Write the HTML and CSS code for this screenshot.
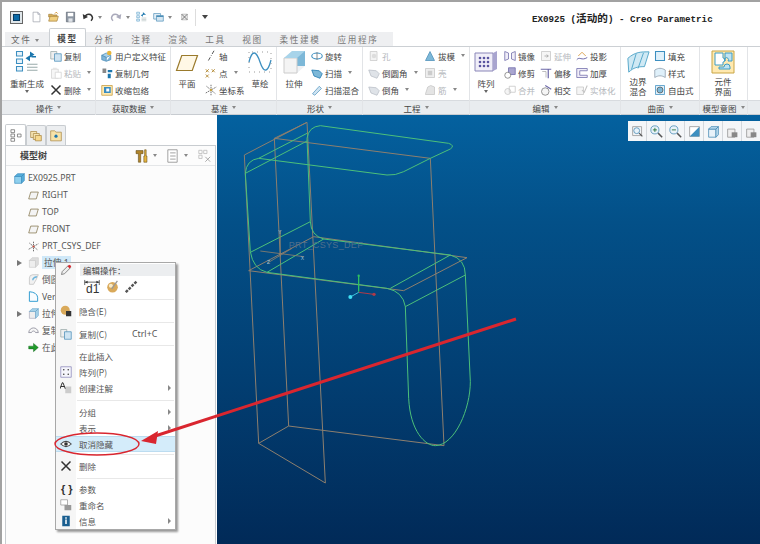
FILE: index.html
```html
<!DOCTYPE html>
<html lang="zh">
<head>
<meta charset="utf-8">
<title>EX0925 - Creo Parametric</title>
<link rel="stylesheet" href="styles.css">
</head>
<body>
<svg class="defs" aria-hidden="true">
<defs>
<symbol id="doc" viewBox="0 0 16 16"><path d="M3 1h7l3 3v11H3z" fill="#fff" stroke="#9a9fa8"/><path d="M10 1v3h3" fill="#dde" stroke="#9a9fa8"/></symbol>
<symbol id="open" viewBox="0 0 16 16"><path d="M1 4h5l1 1h6v3H1z" fill="#d9b25c" stroke="#a5803a"/><path d="M1 14l2-7h12l-2 7z" fill="#f0cf80" stroke="#a5803a"/><path d="M10 3l2-2 2 2" fill="none" stroke="#d08a20" stroke-width="1.4"/></symbol>
<symbol id="save" viewBox="0 0 16 16"><path d="M2 1h12v14H2z" fill="#8d97a3" stroke="#5d6671"/><path d="M4 2h8v5H4z" fill="#fff"/><path d="M5 10h6v5H5z" fill="#dfe3e8"/></symbol>
<symbol id="undo" viewBox="0 0 16 16"><path d="M4 8c2-5 9-5 10 1 0 2-1 3-2 4" fill="none" stroke="currentColor" stroke-width="2"/><path d="M1 4l1 7 6-3z" fill="currentColor"/></symbol>
<symbol id="regen" viewBox="0 0 16 16"><path d="M1 1h4v3H1zM1 6h4v3H1zM1 11h4v3H1z" fill="#e8f3fa" stroke="#3d8fc0" stroke-width=".7"/><path d="M8 9.500h7M8 11.500h7M8 13.500h7" stroke="#9aa" fill="none" stroke-width=".7"/><path d="M10 1l3 2-3 2zM10 3.500l-3 2 3 2zM11 4h3v1h-3z" fill="#1b76ad"/></symbol>
<symbol id="win" viewBox="0 0 16 16"><path d="M1 3h10v8H1z" fill="#e8f2f9" stroke="#4d8fb8"/><path d="M5 6h10v8H5z" fill="#d4e6f2" stroke="#4d8fb8"/><path d="M5 6h10v2H5z" fill="#4d8fb8"/></symbol>
<symbol id="x" viewBox="0 0 16 16"><path d="M2 2l12 12M14 2L2 14" stroke="#333" stroke-width="2" fill="none"/></symbol>
<symbol id="xs" viewBox="0 0 16 16"><path d="M3 3h10v10H3z" fill="#eee" stroke="#999"/><path d="M3 3l10 10M13 3L3 13" stroke="#666" stroke-width="1.5"/></symbol>
<symbol id="copy" viewBox="0 0 16 16"><path d="M1 2h8v10H1z" fill="#eee" stroke="#9aa"/><path d="M6 5h9v10H6z" fill="#cfe4f2" stroke="#4d8fb8"/></symbol>
<symbol id="paste" viewBox="0 0 16 16" opacity=".5"><path d="M2 3h9v12H2z" fill="#eee" stroke="#aaa"/><path d="M7 7h8v8H7z" fill="#fff" stroke="#aaa"/><path d="M4 1h5v3H4z" fill="#ccc"/></symbol>
<symbol id="udf" viewBox="0 0 16 16"><path d="M1 7l6-3 6 3-6 3z" fill="#a8d0ea" stroke="#4d8fb8"/><path d="M1 7v6l6 2V10zM13 7v6l-6 2" fill="#7fb4d8" stroke="#4d8fb8"/><circle cx="11" cy="4" r="3" fill="#e6b53e"/></symbol>
<symbol id="cg" viewBox="0 0 16 16"><path d="M2 2h5v6H2z" fill="#888"/><path d="M9 4h6v3H9z" fill="#1b76ad"/><path d="M9 9h4v6H9z" fill="#1b76ad"/></symbol>
<symbol id="sw" viewBox="0 0 16 16"><path d="M1 2h14v13H1z" fill="#ffe9b0" stroke="#c49a3c"/><path d="M4 4h9v8H4z" fill="#3a8cc0"/><path d="M7 6h4v4H7z" fill="#fff"/></symbol>
<symbol id="plane" viewBox="0 0 32 24"><path d="M9 2h21l-7 20H2z" fill="#fff8e6" stroke="#9a7a2c" stroke-width="1.6"/></symbol>
<symbol id="axis" viewBox="0 0 16 16"><path d="M12 1L4 15" stroke="#444" stroke-dasharray="5 2 1 2" stroke-width="1.2" fill="none"/></symbol>
<symbol id="pt" viewBox="0 0 16 16"><path d="M1 3l4 4M5 3L1 7M9 3l4 4M13 3L9 7M1 10l4 4M5 10l-4 4" stroke="#b0862c" stroke-width="1.2"/></symbol>
<symbol id="cs" viewBox="0 0 16 16"><path d="M8 1v14M1 12l7-4 7-4M2 3l12 10" stroke="#444" stroke-dasharray="2 1" fill="none"/><circle cx="8" cy="8" r="1.6" fill="#c9a23e"/></symbol>
<symbol id="sketch" viewBox="0 0 24 22"><path d="M1 11c3-12 7-12 11 0s8 10 11-2" fill="none" stroke="#3d8fc0" stroke-width="1.3"/><path d="M1 1v20h22V1z" fill="none" stroke="#999" stroke-dasharray="1 4"/></symbol>
<symbol id="extr" viewBox="0 0 24 24"><path d="M2 8l8-7h13v15l-8 7H2z" fill="#eef1f4"/><path d="M10 1h13v15l-8 0z" fill="#7db8d8"/><path d="M2 8h13v15H2z" fill="#f4f4f4" stroke="#ccc"/><path d="M2 8l8-7h13l-8 7z" fill="#a8d4ea"/></symbol>
<symbol id="rev" viewBox="0 0 16 16"><ellipse cx="8" cy="8" rx="7" ry="4" fill="none" stroke="#3d8fc0" stroke-width="1.4"/><path d="M8 3v10" stroke="#666"/></symbol>
<symbol id="sweep" viewBox="0 0 16 16"><path d="M1 4l10 1 4 4-3 6-8-3z" fill="#7db8d8" stroke="#1b76ad"/></symbol>
<symbol id="blend" viewBox="0 0 16 16"><path d="M2 13L11 3l3 3-9 9z" fill="#cfe4f2" stroke="#5a9ac2"/></symbol>
<symbol id="gsweep" viewBox="0 0 16 16"><path d="M1 4l10 1 4 4-3 6-8-3z" fill="#dfe3e8" stroke="#b8bec6"/></symbol>
<symbol id="ghole" viewBox="0 0 16 16"><path d="M3 2h9v12H3z" fill="#f3f3f3" stroke="#c8c8c8"/><circle cx="8" cy="8" r="3" fill="#ddd"/></symbol>
<symbol id="draft" viewBox="0 0 16 16"><path d="M2 14L8 2l6 12z" fill="#7db8d8" stroke="#4d8fb8"/></symbol>
<symbol id="gbox" viewBox="0 0 16 16"><path d="M2 2h12v12H2z" fill="#eee" stroke="#c4c4c4"/><path d="M5 5h6v6H5z" fill="#ccc"/></symbol>
<symbol id="grib" viewBox="0 0 16 16"><path d="M2 13l3-9 4-2 5 2v10H2z" fill="#e4e4e4" stroke="#c4c4c4"/></symbol>
<symbol id="grid" viewBox="0 0 24 24"><path d="M1 3h18v18H1z" fill="#f0eef8" stroke="#8a86b8"/><path d="M19 3l4-2v18l-4 2z" fill="#a9a5cf"/><g fill="#5a55a0"><circle cx="6" cy="8" r="1.3"/><circle cx="10" cy="8" r="1.3"/><circle cx="14" cy="8" r="1.3"/><circle cx="6" cy="12" r="1.3"/><circle cx="10" cy="12" r="1.3"/><circle cx="14" cy="12" r="1.3"/><circle cx="6" cy="16" r="1.3"/><circle cx="10" cy="16" r="1.3"/><circle cx="14" cy="16" r="1.3"/></g></symbol>
<symbol id="mirror" viewBox="0 0 16 16"><path d="M1 2l5 2v8l-5 2zM15 2l-5 2v8l5 2z" fill="#f0eef8" stroke="#6c68a8"/></symbol>
<symbol id="trim" viewBox="0 0 16 16"><path d="M6 1h9v9H6z" fill="#a9a5cf" stroke="#6c68a8"/><circle cx="5" cy="11" r="4" fill="#fff" stroke="#777"/></symbol>
<symbol id="gmerge" viewBox="0 0 16 16"><circle cx="5" cy="10" r="4" fill="#f5f5f5" stroke="#c4c4c4"/><path d="M7 3h8v8H7z" fill="none" stroke="#c4c4c4"/></symbol>
<symbol id="gext" viewBox="0 0 16 16"><path d="M2 2h12v12H2z" fill="#f5f5f5" stroke="#c4c4c4"/><path d="M6 8h5M9 6l2 2-2 2" stroke="#999" fill="none"/></symbol>
<symbol id="offs" viewBox="0 0 16 16"><path d="M1 3h14M11 3v12" stroke="#6c68a8" stroke-width="1.6" fill="none"/><path d="M3 6h5v8" stroke="#aaa" fill="none"/></symbol>
<symbol id="inter" viewBox="0 0 16 16"><circle cx="7" cy="10" r="5" fill="#f5f5f5" stroke="#777"/><path d="M7 2l8 5" stroke="#6c68a8" stroke-width="1.4"/></symbol>
<symbol id="proj" viewBox="0 0 16 16"><path d="M1 13c4-5 6 2 14-3" stroke="#6c68a8" fill="none" stroke-width="1.3"/><path d="M3 8l5-5 5 5" stroke="#d08a20" fill="none"/></symbol>
<symbol id="thick" viewBox="0 0 16 16"><path d="M1 2h14v3H5v6h10v3H1z" fill="#f0eef8" stroke="#6c68a8"/></symbol>
<symbol id="gsolid" viewBox="0 0 16 16"><path d="M1 4h9v10H1z" fill="#f5f5f5" stroke="#c4c4c4"/><path d="M8 8l3 3 4-9" fill="none" stroke="#c4c4c4" stroke-width="1.4"/></symbol>
<symbol id="bound" viewBox="0 0 26 24"><path d="M2 8c8-7 14-7 23-7l-5 16c-7 0-12 1-17 6z" fill="#cfe9f4" stroke="#4fa4c8"/><path d="M11 3l-5 17M19 2l-6 17" stroke="#4fa4c8" fill="none"/></symbol>
<symbol id="fill" viewBox="0 0 16 16"><path d="M2 2h12v12H2z" fill="#dff0fa" stroke="#3d8fc0" stroke-width="1.4"/></symbol>
<symbol id="style" viewBox="0 0 16 16"><path d="M1 4c5-3 9-3 14 0v10c-5-3-9-3-14 0z" fill="#dff0fa" stroke="#8a9aa8"/></symbol>
<symbol id="free" viewBox="0 0 16 16"><path d="M2 2h12v12H2z" fill="#dff0fa" stroke="#3d8fc0"/><circle cx="8" cy="8" r="4" fill="#7db8d8" stroke="#555"/></symbol>
<symbol id="puzzle" viewBox="0 0 24 24"><path d="M1 1h22v22H1z" fill="#ffe9b0" stroke="#c9a544"/><path d="M4 3h8v5a2 2 0 1 1 0 4v3H4z" fill="#fff" stroke="#3d9cc4"/><path d="M14 3h7v8h-4a2 2 0 1 0-3 0zM13 17a3 3 0 0 1 6 0v2H8v-2z" fill="#bfe3f2" stroke="#3d9cc4"/></symbol>
<symbol id="tree" viewBox="0 0 16 18"><path d="M1 1h5v4H1zM1 7h5v4H1zM1 13h5v4H1zM10 7h5v4h-5z" fill="#fff" stroke="#666"/></symbol>
<symbol id="tab2" viewBox="0 0 18 18"><path d="M1 3h9v9H1z" fill="#f5e5b5" stroke="#a5803a"/><path d="M5 6h9v9H5z" fill="#f5e5b5" stroke="#a5803a"/><path d="M8 9h9v8H8z" fill="#f7d98e" stroke="#a5803a"/></symbol>
<symbol id="tab3" viewBox="0 0 18 18"><path d="M1 2h6l2 2h8v13H1z" fill="#f7e2a8" stroke="#a5803a"/><circle cx="9" cy="10" r="2.4" fill="#1b76ad"/></symbol>
<symbol id="tools" viewBox="0 0 16 18"><path d="M1 2h9v4H7v11H4V6H1z" fill="#b0852c" stroke="#5e4714" stroke-width=".7"/><path d="M12 1h2v8h1v8h-4V9h1z" fill="#e6b53e" stroke="#5e4714" stroke-width=".7"/></symbol>
<symbol id="list" viewBox="0 0 16 18"><path d="M2 1h12v16H2z" fill="#fff" stroke="#888"/><path d="M5 5h7M5 9h7M5 13h7" stroke="#888"/></symbol>
<symbol id="filt" viewBox="0 0 16 16"><path d="M1 1h4v4H1zM1 7h4v4H1zM7 1h4v4H7z" fill="none" stroke="#bbb"/><path d="M9 9l6 6M15 9l-6 6" stroke="#999"/></symbol>
<symbol id="part" viewBox="0 0 16 16"><path d="M1 5h10v10H1z" fill="#8fd0ee" stroke="#3d8fc0"/><path d="M1 5l4-4h10l-4 4zM11 5l4-4v10l-4 4z" fill="#56aedb" stroke="#3d8fc0"/></symbol>
<symbol id="dplane" viewBox="0 0 16 12"><path d="M4 1h11l-3 10H1z" fill="#f4f4f4" stroke="#7a6a3e"/></symbol>
<symbol id="csys" viewBox="0 0 16 16"><path d="M8 1v14M1 12l14-8M2 3l12 10" stroke="#333" stroke-dasharray="2 1" fill="none"/><circle cx="8" cy="8" r="1.4" fill="#c43"/></symbol>
<symbol id="ext1" viewBox="0 0 16 16"><path d="M2 5h9v10H2z" fill="#eee" stroke="#ccc"/><path d="M2 5l4-4h9v10l-4 4V5z" fill="#ddd" stroke="#ccc"/></symbol>
<symbol id="ext2" viewBox="0 0 16 16"><path d="M2 5h9v10H2z" fill="#eee" stroke="#aab"/><path d="M2 5l4-4h9l-4 4zM11 5l4-4v10l-4 4z" fill="#a8d4ea" stroke="#6ca8cc"/></symbol>
<symbol id="rnd" viewBox="0 0 16 16"><path d="M2 15V6q0-5 5-5h8l-3 7-4 7z" fill="#f1f1f1" stroke="#bbb"/><path d="M7 9q0-4 6-5" stroke="#6cb4dc" stroke-width="2" fill="none"/></symbol>
<symbol id="ver" viewBox="0 0 16 16"><path d="M2 1v14h12V9Q13 2 2 1z" fill="#f8fcff" stroke="#2e9bd0" stroke-width="1.4"/></symbol>
<symbol id="cpy" viewBox="0 0 16 16"><path d="M1 11c1-9 13-9 14 0H11C10 8 6 8 5 11z" fill="#f7f7f7" stroke="#778"/></symbol>
<symbol id="ins" viewBox="0 0 16 16"><path d="M1 6h7V2l7 6-7 6v-4H1z" fill="#1f9a2a" stroke="#0b5c14" stroke-width=".6"/></symbol>
<symbol id="pencil" viewBox="0 0 16 16"><path d="M2 14l1-4 8-8 3 3-8 8z" fill="#eee" stroke="#666"/><path d="M10 3l3-2 2 2-2 3z" fill="#d9262f"/></symbol>
<symbol id="dim" viewBox="0 0 22 20"><path d="M1 1v7M21 1v7M1 4h20" stroke="#333" fill="none"/><path d="M1 4l4-2v4zM21 4l-4-2v4z" fill="#333"/></symbol>
<symbol id="ball" viewBox="0 0 16 16"><circle cx="8" cy="9" r="6.5" fill="#d9a95a"/><circle cx="6" cy="7" r="2.5" fill="#f8ebc8"/><path d="M7 11L14 1" stroke="#999" stroke-width="1.6"/></symbol>
<symbol id="chain" viewBox="0 0 16 16"><path d="M1 15L15 1" stroke="#555" stroke-width="3" stroke-dasharray="3.5 1.500"/></symbol>
<symbol id="supp" viewBox="0 0 16 16"><circle cx="7" cy="7" r="6" fill="#d9a95a"/><path d="M8 8h7v7H8z" fill="#333"/></symbol>
<symbol id="pat" viewBox="0 0 16 16"><path d="M1 1h14v14H1z" fill="#f6f6fc" stroke="#8a86b8"/><g fill="#444"><circle cx="5" cy="5" r="1.1"/><circle cx="11" cy="5" r="1.1"/><circle cx="5" cy="11" r="1.1"/><circle cx="11" cy="11" r="1.1"/></g></symbol>
<symbol id="ann" viewBox="0 0 16 16"><path d="M7 6h8v9H7z" fill="#ccc"/><path d="M0 9L3 1h1l3 8M1 6h5" stroke="#222" fill="none" stroke-width="1.2"/></symbol>
<symbol id="eye" viewBox="0 0 16 16"><path d="M1 8q7-7 14 0-7 7-14 0z" fill="#fff" stroke="#444" stroke-width="1.4"/><circle cx="8" cy="8" r="2.4" fill="#333"/></symbol>
<symbol id="rename" viewBox="0 0 16 16"><path d="M1 1h9v7H1z" fill="#fff" stroke="#999"/><path d="M6 8h9v7H6z" fill="#999"/></symbol>
<symbol id="info" viewBox="0 0 16 16"><path d="M3 1h10v14H3z" fill="#1a5f90"/><path d="M7 3h2v2H7zM7 6h2v6H7z" fill="#fff"/></symbol>
<symbol id="zfit" viewBox="0 0 16 16"><path d="M2 2h11v11H2z" fill="none" stroke="#999"/><circle cx="7" cy="7" r="3.6" fill="#e8f2f9" stroke="#4d8fb8"/><path d="M10 10l4 4" stroke="#555" stroke-width="1.6"/></symbol>
<symbol id="zin" viewBox="0 0 16 16"><circle cx="6" cy="6" r="5" fill="#e8f2f9" stroke="#4d8fb8"/><path d="M3.500 6h5M6 3.500v5" stroke="#1a6a2a"/><path d="M10 10l5 5" stroke="#555" stroke-width="1.8"/></symbol>
<symbol id="zout" viewBox="0 0 16 16"><circle cx="6" cy="6" r="5" fill="#e8f2f9" stroke="#4d8fb8"/><path d="M3.500 6h5" stroke="#1a6a2a"/><path d="M10 10l5 5" stroke="#555" stroke-width="1.8"/></symbol>
<symbol id="repaint" viewBox="0 0 16 16"><path d="M2 2h12v12H2z" fill="#fff" stroke="#999"/><path d="M2 14L14 2v12z" fill="#3d8fc0"/></symbol>
<symbol id="view" viewBox="0 0 16 16"><path d="M2 5h9v10H2z" fill="#e8f2f9" stroke="#4d8fb8"/><path d="M2 5l3-3h9l-3 3zM11 5l3-3v10l-3 3z" fill="#bcdcef" stroke="#4d8fb8"/></symbol>
<symbol id="saved" viewBox="0 0 16 16"><path d="M2 5h9v10H2z" fill="#eee" stroke="#999"/><path d="M7 9h7v6H7z" fill="#888"/></symbol>
</defs>
</svg>

<div class="app">
  <header class="titlebar">
    <div class="qat">
      <span class="appicon"><span></span></span>
      <svg class="q q-first"><use href="#doc"/></svg>
      <svg class="q"><use href="#open"/></svg>
      <svg class="q"><use href="#save"/></svg>
      <svg class="q undo"><use href="#undo"/></svg><i class="caret"></i>
      <svg class="q redo"><use href="#undo"/></svg><i class="caret"></i>
      <svg class="q"><use href="#regen"/></svg>
      <svg class="q"><use href="#win"/></svg><i class="caret"></i>
      <svg class="q small"><use href="#xs"/></svg>
      <span class="qsep"></span>
      <i class="caret dark"></i>
    </div>
    <div class="wintitle">EX0925 (<span class="cjk">活动的</span>) - Creo Parametric</div>
  </header>

  <nav class="tabs">
    <span class="filetab">文件 <i class="caret"></i></span>
    <span class="tab active">模型</span>
    <span class="tab">分析</span>
    <span class="tab">注释</span>
    <span class="tab">渲染</span>
    <span class="tab">工具</span>
    <span class="tab">视图</span>
    <span class="tab wide">柔性建模</span>
    <span class="tab wide">应用程序</span>
  </nav>

  <section class="ribbon">
    <div class="group g1">
      <div class="gbody">
        <div class="big b1"><svg class="bigi"><use href="#regen"/></svg><span>重新生成</span><i class="caret"></i></div>
        <div class="col">
          <div class="it"><svg><use href="#copy"/></svg>复制</div>
          <div class="it off"><svg><use href="#paste"/></svg>粘贴<i class="caret"></i></div>
          <div class="it"><svg><use href="#x"/></svg>删除<i class="caret"></i></div>
        </div>
      </div>
      <div class="glabel">操作<i class="caret"></i></div>
    </div>
    <div class="group g2">
      <div class="gbody">
        <div class="col">
          <div class="it"><svg><use href="#udf"/></svg>用户定义特征</div>
          <div class="it"><svg><use href="#cg"/></svg>复制几何</div>
          <div class="it"><svg><use href="#sw"/></svg>收缩包络</div>
        </div>
      </div>
      <div class="glabel">获取数据<i class="caret"></i></div>
    </div>
    <div class="group g3">
      <div class="gbody">
        <div class="big b3a"><svg class="bigi mid"><use href="#plane"/></svg><span>平面</span></div>
        <div class="col c3">
          <div class="it"><svg><use href="#axis"/></svg>轴</div>
          <div class="it"><svg><use href="#pt"/></svg>点<i class="caret"></i></div>
          <div class="it"><svg><use href="#cs"/></svg>坐标系</div>
        </div>
        <div class="big b3b"><svg class="bigi"><use href="#sketch"/></svg><span>草绘</span></div>
      </div>
      <div class="glabel">基准<i class="caret"></i></div>
    </div>
    <div class="group g4">
      <div class="gbody">
        <div class="big b4"><svg class="bigi"><use href="#extr"/></svg><span>拉伸</span></div>
        <div class="col">
          <div class="it"><svg><use href="#rev"/></svg>旋转</div>
          <div class="it"><svg><use href="#sweep"/></svg>扫描<i class="caret"></i></div>
          <div class="it"><svg><use href="#blend"/></svg>扫描混合</div>
        </div>
      </div>
      <div class="glabel">形状<i class="caret"></i></div>
    </div>
    <div class="group g5">
      <div class="gbody">
        <div class="col c5a">
          <div class="it off"><svg><use href="#ghole"/></svg>孔</div>
          <div class="it"><svg><use href="#gsweep"/></svg>倒圆角<i class="caret"></i></div>
          <div class="it"><svg><use href="#gsweep"/></svg>倒角<i class="caret"></i></div>
        </div>
        <div class="col">
          <div class="it"><svg><use href="#draft"/></svg>拔模<i class="caret"></i></div>
          <div class="it off"><svg><use href="#gbox"/></svg>壳</div>
          <div class="it off"><svg><use href="#grib"/></svg>筋<i class="caret"></i></div>
        </div>
      </div>
      <div class="glabel">工程<i class="caret"></i></div>
    </div>
    <div class="group g6">
      <div class="gbody">
        <div class="big b6"><svg class="bigi"><use href="#grid"/></svg><span>阵列</span><i class="caret"></i></div>
        <div class="col c6">
          <div class="it"><svg><use href="#mirror"/></svg>镜像</div>
          <div class="it"><svg><use href="#trim"/></svg>修剪</div>
          <div class="it off"><svg><use href="#gmerge"/></svg>合并</div>
        </div>
        <div class="col c6">
          <div class="it off"><svg><use href="#gext"/></svg>延伸</div>
          <div class="it"><svg><use href="#offs"/></svg>偏移</div>
          <div class="it"><svg><use href="#inter"/></svg>相交</div>
        </div>
        <div class="col">
          <div class="it"><svg><use href="#proj"/></svg>投影</div>
          <div class="it"><svg><use href="#thick"/></svg>加厚</div>
          <div class="it off"><svg><use href="#gsolid"/></svg>实体化</div>
        </div>
      </div>
      <div class="glabel">编辑<i class="caret"></i></div>
    </div>
    <div class="group g7">
      <div class="gbody">
        <div class="big b7"><svg class="bigi"><use href="#bound"/></svg><span class="two">边界<br>混合</span></div>
        <div class="col">
          <div class="it"><svg><use href="#fill"/></svg>填充</div>
          <div class="it"><svg><use href="#style"/></svg>样式</div>
          <div class="it"><svg><use href="#free"/></svg>自由式</div>
        </div>
      </div>
      <div class="glabel">曲面<i class="caret"></i></div>
    </div>
    <div class="group g8">
      <div class="gbody">
        <div class="big b8"><svg class="bigi"><use href="#puzzle"/></svg><span class="two">元件<br>界面</span></div>
      </div>
      <div class="glabel">模型意图<i class="caret"></i></div>
    </div>
    <div class="group g9"><div class="gbody"></div><div class="glabel"></div></div>
  </section>

  <main class="main">
    <aside class="side">
      <div class="sidetabs">
        <span class="stab active"><svg><use href="#tree"/></svg></span>
        <span class="stab"><svg><use href="#tab2"/></svg></span>
        <span class="stab"><svg><use href="#tab3"/></svg></span>
      </div>
      <div class="panel">
        <div class="panelhead">
          <span class="ptitle">模型树</span>
          <svg class="ph"><use href="#tools"/></svg><i class="caret"></i>
          <svg class="ph"><use href="#list"/></svg><i class="caret"></i>
          <svg class="ph last"><use href="#filt"/></svg>
        </div>
        <ul class="tree">
          <li class="root"><svg><use href="#part"/></svg>EX0925.PRT</li>
          <li><svg><use href="#dplane"/></svg>RIGHT</li>
          <li><svg><use href="#dplane"/></svg>TOP</li>
          <li><svg><use href="#dplane"/></svg>FRONT</li>
          <li><svg><use href="#csys"/></svg>PRT_CSYS_DEF</li>
          <li><b class="tw"></b><svg><use href="#ext1"/></svg><span class="sel">拉伸 1</span></li>
          <li><svg><use href="#rnd"/></svg>倒圆角 1</li>
          <li><svg><use href="#ver"/></svg>Ver</li>
          <li><b class="tw"></b><svg><use href="#ext2"/></svg>拉伸 2</li>
          <li><svg><use href="#cpy"/></svg>复制 1</li>
          <li><svg><use href="#ins"/></svg>在此插入</li>
        </ul>
      </div>
    </aside>

    <section class="canvas">
      <svg class="model" viewBox="0 0 900 1290">
        <g class="gray">
          <path d="M82 120L270 22L325 1104L125 985L82 120"/>
          <path d="M172 70L640 130L681 992L215 933L172 70"/>
          <path d="M270 22L172 70M125 985L215 933"/>
          <path d="M95 467L290 365L750 428L560 527L95 467"/>
        </g>
        <g class="green">
          <path d="M310 32L695 85Q715 92 700 102L640 130L560 170Q535 182 510 180L125 130Q88 135 85 175L100 410Q108 462 150 472L510 520Q558 530 565 575L575 850C580 950 625 992 655 992C715 990 760 880 760 800L745 480Q745 432 700 420L320 372Q282 362 280 320L270 70Q275 35 310 32Z"/>
          <path d="M85 175L270 78M125 130L270 55M100 412L280 320M150 472L320 372M565 575L745 480M520 520L700 420"/>
        </g>
        <g class="csysline">
          <path d="M190 345V425M130 408L260 425M150 445L225 400"/>
        </g>
        <text class="modeltext" x="215" y="400">PRT_CSYS_DEF</text>
        <text class="axislabel" x="184" y="356">Y</text>
        <text class="axislabel" x="150" y="446">Z</text>
        <text class="axislabel" x="251" y="434">X</text>
        <path class="ax-g" d="M425 482V530"/>
        <path class="ax-r" d="M425 532L470 538"/>
        <path class="ax-c" d="M425 532L400 546"/>
        <circle class="dot-g" cx="425" cy="482" r="3.5"/>
        <circle class="dot-r" cx="471" cy="538" r="5"/>
        <circle class="dot-c" cx="400" cy="546" r="6"/>
      </svg>
      <div class="viewbar">
        <span class="vb"><svg><use href="#zfit"/></svg></span>
        <span class="vb"><svg><use href="#zin"/></svg></span>
        <span class="vb"><svg><use href="#zout"/></svg></span>
        <span class="vb"><svg><use href="#repaint"/></svg></span>
        <span class="vb"><svg><use href="#view"/></svg></span>
        <span class="vb"><svg><use href="#saved"/></svg></span>
        <span class="vb"><svg><use href="#saved"/></svg></span>
      </div>
    </section>
  </main>

  <div class="menu">
    <div class="mhead"><svg class="mi"><use href="#pencil"/></svg><span class="mheadtext">编辑操作：</span></div>
    <div class="miniicons">
      <svg class="d"><use href="#dim"/></svg><span class="d1">d1</span>
      <svg class="m"><use href="#ball"/></svg>
      <svg class="m"><use href="#chain"/></svg>
    </div>
    <hr>
    <div class="mrow r-sep"><svg class="mi"><use href="#supp"/></svg>隐含(E)</div>
    <hr>
    <div class="mrow r-sep"><svg class="mi"><use href="#copy"/></svg>复制(C)<span class="short">Ctrl+C</span></div>
    <hr>
    <div class="mrow"><span class="mi"></span>在此插入</div>
    <div class="mrow"><svg class="mi"><use href="#pat"/></svg>阵列(P)</div>
    <div class="mrow"><svg class="mi"><use href="#ann"/></svg>创建注解<i class="sub"></i></div>
    <hr class="gap3">
    <div class="mrow"><span class="mi"></span>分组<i class="sub"></i></div>
    <div class="mrow"><span class="mi"></span>表示<i class="sub"></i></div>
    <div class="mrow hi"><svg class="mi"><use href="#eye"/></svg>取消隐藏</div>
    <hr>
    <div class="mrow r-sep"><svg class="mi"><use href="#x"/></svg>删除</div>
    <hr class="gap1">
    <div class="mrow"><span class="mi brace">{ }</span>参数</div>
    <div class="mrow"><svg class="mi"><use href="#rename"/></svg>重命名</div>
    <div class="mrow"><svg class="mi"><use href="#info"/></svg>信息<i class="sub"></i></div>
  </div>

  <svg class="annot" viewBox="0 0 760 544">
    <line x1="516" y1="319" x2="152" y2="437"/>
    <polygon points="141,441 158,431 156,444"/>
    <ellipse cx="97" cy="444" rx="42" ry="11"/>
  </svg>
</div>
</body>
</html>
```
FILE: styles.css
```css
* { box-sizing: border-box; }
html, body { margin: 0; padding: 0; }
body { width: 760px; height: 544px; overflow: hidden; background: #fff; font-family: "Noto Sans CJK SC", "Noto Sans", sans-serif; font-size: 8.5px; color: #555; }
.defs { position: absolute; width: 0; height: 0; }
.app { position: relative; width: 760px; height: 544px; display: flex; flex-direction: column; border-top: 2px solid #a2a2a2; border-left: 2px solid #a2a2a2; overflow: hidden; }

.caret { display: inline-block; width: 0; height: 0; border-left: 2.5px solid transparent; border-right: 2.5px solid transparent; border-top: 3px solid #888; margin-left: 4px; vertical-align: middle; }
.caret.dark { border-top-color: #444; border-left-width: 3px; border-right-width: 3px; border-top-width: 4px; margin-left: 6px; }

/* title bar */
.titlebar { height: 30px; flex: none; display: flex; align-items: center; background: #fff; }
.qat { display: flex; align-items: center; width: 530px; padding-left: 8px; }
.appicon { width: 13px; height: 13px; border: 1px solid #666; background: #dfe6ea; display: flex; align-items: center; justify-content: center; }
.appicon span { width: 7px; height: 7px; background: #0a6aa8; border: 1px solid #083a60; }
.q { width: 11px; height: 12px; margin-left: 6px; color: #333; flex: none; }
.q-first { margin-left: 8px; }
.q.undo { width: 12px; margin-left: 6px; }
.q.redo { width: 12px; margin-left: 8px; color: #aab; transform: scaleX(-1); }
.q.small { width: 9px; margin-left: 8px; }
.qsep { width: 1px; height: 17px; background: #ddd; margin-left: 6px; }
.qat .caret { margin-left: 4px; }
.qat .caret.dark { margin-left: 6px; }
.wintitle { font-family: "Liberation Mono", monospace; font-weight: 700; font-size: 9.2px; color: #222; white-space: nowrap; }
.cjk { font-family: "Noto Sans CJK SC", sans-serif; font-size: 10.6px; }

/* tabs */
.tabs { height: 14px; flex: none; width: 388px; margin-left: 3px; background: #eeeff1; display: flex; align-items: center; font-size: 8.6px; letter-spacing: 1.6px; color: #777; position: relative; }
.filetab { width: 44px; padding-left: 6px; white-space: nowrap; color: #666; }
.filetab .caret { margin-left: 0; }
.tab { width: 37px; text-align: center; flex: none; }
.tab.active { width: 37px; height: 18px; margin-top: -4px; line-height: 19px; background: #fff; border: 1px solid #ccd0d4; border-bottom: 0; font-weight: 700; color: #444; border-radius: 2px 2px 0 0; position: relative; z-index: 1; }
.tab.wide { width: 58px; }

/* ribbon */
.ribbon { display: flex; flex: none; height: 69px; border-top: 1px solid #ccd0d4; }
.group { display: flex; flex-direction: column; border-right: 1px solid #e2e4e7; flex: none; }
.gbody { height: 53px; display: flex; background: #fff; }
.glabel { height: 15px; background: #e9ecef; border-top: 1px solid #d8dbdf; border-bottom: 1px solid #c8ccd1; display: flex; align-items: center; justify-content: center; font-size: 8.5px; color: #444; white-space: nowrap; }
.g1 { width: 94px; }
.g2 { width: 75px; }
.g3 { width: 106px; }
.g4 { width: 86px; }
.g5 { width: 107px; }
.g6 { width: 151px; }
.g7 { width: 79px; }
.g8 { width: 48px; }
.g9 { flex: 1; border-right: 0; }

.big { display: flex; flex-direction: column; align-items: center; flex: none; font-size: 8.5px; line-height: 11px; color: #444; white-space: nowrap; padding-top: 3px; }
.bigi { width: 24px; height: 24px; flex: none; margin-bottom: 4px; }
.big .caret { margin: 1px 0 0; border-top-color: #666; }
.big .two { margin-top: -2px; line-height: 10px; }
.bigi.mid { width: 24px; height: 20px; margin: 3px 0 5px; }
.b1 { width: 34px; margin-left: 8px; margin-right: 6px; }
.b3a { width: 26px; margin: 0 5px 0 3px; }
.b3b { width: 26px; margin-left: 3px; }
.b4 { width: 24px; margin: 0 5px 0 5px; }
.b6 { width: 24px; margin: 0 6px 0 4px; }
.b7 { width: 26px; margin: 0 3px 0 4px; }
.b8 { width: 24px; margin-left: 11px; }

.col { display: flex; flex-direction: column; flex: none; }
.it { height: 17px; display: flex; align-items: center; white-space: nowrap; font-size: 8.5px; color: #444; }
.it svg { width: 12px; height: 12px; margin-right: 2px; flex: none; }
.it.off { color: #b4b8bc; }
.it .caret { margin-left: 6px; }
.g2 .col { padding-left: 5px; }
.c3 { width: 39px; }
.c5a { width: 61px; padding-left: 5px; }
.c6 { width: 36px; }

/* main */
.main { flex: 1; display: flex; min-height: 0; }
.side { width: 215px; flex: none; background: #fff; padding: 9px 0 0 3px; display: flex; flex-direction: column; }
.sidetabs { display: flex; height: 21px; }
.stab { width: 20px; height: 20px; margin-top: 1px; background: #eceef0; border: 1px solid #c8ccd0; border-bottom: 0; border-radius: 2px 2px 0 0; display: flex; align-items: center; justify-content: center; }
.stab svg { width: 12px; height: 13px; }
.stab.active { width: 21px; height: 21px; margin-top: 0; background: #fff; position: relative; z-index: 1; margin-bottom: -1px; }
.panel { flex: 1; border: 1px solid #c8ccd0; border-bottom: 0; margin-right: 1px; background: #fcfcfc; }
.panelhead { height: 20px; display: flex; align-items: center; padding-left: 14px; font-size: 9px; border-bottom: 1px solid #e4e6e8; }
.ptitle { font-weight: 700; color: #444; width: 115px; }
.ph { width: 13px; height: 14px; flex: none; }
.panelhead .caret { margin: 0 9px 0 5px; }
.ph.last { margin-left: 1px; }
.tree { list-style: none; margin: 0; padding: 4px 0 0 19px; font-family: "Noto Sans", "Noto Sans CJK SC", sans-serif; font-size: 8.7px; color: #555; }
.tree li { height: 16.9px; display: flex; align-items: center; white-space: nowrap; padding-left: 3px; position: relative; }
.tree li.root { margin-left: -11px; padding-left: 0; }
.tree svg { width: 11px; height: 11px; margin-right: 3px; flex: none; }
.tree .tw { position: absolute; left: -8px; width: 0; height: 0; border-left: 5px solid #777; border-top: 3.5px solid transparent; border-bottom: 3.5px solid transparent; }
.sel { background: #cfe8f8; padding: 0 2px; }

/* canvas */
.canvas { flex: 1; position: relative; overflow: hidden; background: linear-gradient(#04619f 0, #035088 25%, #023f73 60%, #012a58 100%); }
.model { position: absolute; left: 0; top: 0; width: 300px; height: 430px; }
.model path { fill: none; }
.gray path { stroke: #8d7f6e; stroke-width: 3; }
.green path { stroke: #4cc07a; stroke-width: 3; }
.csysline path { stroke: #8d7f6e; stroke-width: 2.5; }
.modeltext { font-family: "Liberation Sans", sans-serif; font-size: 27px; letter-spacing: 1px; fill: #4e6f8d; }
.axislabel { font-family: "Liberation Sans", sans-serif; font-size: 15px; fill: #9fc2d8; }
.model .ax-g { stroke: #2fc060; stroke-width: 4; }
.model .ax-r { stroke: #b03a48; stroke-width: 3; }
.model .ax-c { stroke: #40c8e0; stroke-width: 3; }
.dot-g { fill: #2fc060; }
.dot-r { fill: #b03a48; }
.dot-c { fill: #3fe0f4; }

.viewbar { position: absolute; left: 411px; top: 6px; display: flex; background: #f4f6f8; height: 20px; width: 135px; }
.vb { width: 19px; height: 20px; border-right: 1px solid #d4d8dc; display: flex; align-items: center; justify-content: center; flex: none; }
.vb svg { width: 13px; height: 13px; }

/* context menu */
.menu { position: absolute; left: 53px; top: 260px; width: 121px; height: 268px; background: linear-gradient(to right, #f6f6f6 0, #f6f6f6 20px, #fff 20px); border: 1px solid #a8a8a8; box-shadow: 2px 2px 2px rgba(0,0,0,.4); font-size: 8.5px; color: #555; padding-top: 1px; }
.mhead { height: 12px; display: flex; align-items: center; }
.mheadtext { flex: 1; margin-left: 1px; padding-left: 3px; background: #eceef0; height: 12px; line-height: 12px; color: #444; }
.mi { width: 12px; height: 12px; margin: 0 7px 0 4px; flex: none; display: inline-block; }
.brace { font-family: "Liberation Sans", sans-serif; font-weight: 700; font-size: 11px; line-height: 12px; color: #333; white-space: nowrap; margin-left: 5px; margin-right: 6px; }
.miniicons { height: 21px; display: flex; align-items: center; padding-left: 28px; position: relative; }
.miniicons svg.d { width: 16px; height: 15px; }
.d1 { position: absolute; left: 30px; top: 7px; font-family: "Liberation Sans", sans-serif; font-size: 12px; line-height: 13px; color: #333; }
.miniicons svg.m { width: 13px; height: 13px; margin-left: 6px; }
.menu hr { border: 0; border-top: 1px solid #e8e8e8; margin: 2px 1px 2px 21px; height: 0; }
.menu hr.gap3 { margin: 4px 1px 3px 21px; }
.menu hr.gap1 { margin: 3px 1px 2px 21px; }
.mrow { height: 16px; display: flex; align-items: center; position: relative; white-space: nowrap; }
.mrow.r-sep { height: 18px; }
.short { position: absolute; left: 76px; font-family: "Noto Sans", sans-serif; font-size: 8.8px; }
.sub { position: absolute; right: 4px; top: 5px; width: 0; height: 0; border-left: 3px solid #888; border-top: 3px solid transparent; border-bottom: 3px solid transparent; }
.mrow.hi { background: #d4ecfa; border: 1px solid #bcdcf0; border-width: 1px 0; }

.annot { position: absolute; left: -2px; top: -2px; width: 760px; height: 544px; pointer-events: none; }
.annot line { stroke: #d9262f; stroke-width: 3; }
.annot polygon { fill: #d9262f; }
.annot ellipse { fill: none; stroke: #d9262f; stroke-width: 1.4; }
```
